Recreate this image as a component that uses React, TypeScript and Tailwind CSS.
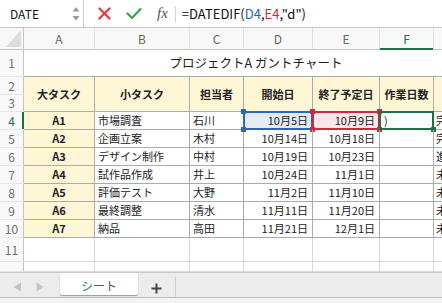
import React from "react";

const rows = [
  ["A1", "市場調査", "石川", "10月5日", "10月9日", "完了"],
  ["A2", "企画立案", "木村", "10月14日", "10月18日", "完了"],
  ["A3", "デザイン制作", "中村", "10月19日", "10月23日", "進行中"],
  ["A4", "試作品作成", "井上", "10月24日", "11月1日", "未着手"],
  ["A5", "評価テスト", "大野", "11月2日", "11月10日", "未着手"],
  ["A6", "最終調整", "清水", "11月11日", "11月20日", "未着手"],
  ["A7", "納品", "高田", "11月21日", "12月1日", "未着手"],
];

function RowHead({ n, active }: { n: string; active?: boolean }) {
  return (
    <div
      className={
        "relative flex items-center justify-center border-r border-b border-r-[#c4c4c4] border-b-[#e8e8e8] bg-[#f8f8f8] text-[12px] " +
        (active ? "text-[#1e7145]" : "text-[#707070]")
      }
    >
      {n}
      {active && <div className="absolute right-[-1px] top-0 bottom-0 w-[2px] bg-[#1e7145]" />}
    </div>
  );
}

function Corner({ c }: { c: string }) {
  return <div className={"absolute w-[5px] h-[5px] " + c} />;
}

export default function App() {
  const cell = "border-r border-b border-[#ababab] flex items-center text-[11px] text-[#222] whitespace-nowrap overflow-hidden";
  return (
    <div className="w-[442px] h-[303px] overflow-hidden bg-white flex flex-col font-['Noto_Sans_CJK_JP',sans-serif]">
      {/* formula bar */}
      <div className="h-[28px] shrink-0 flex items-center border-b border-[#c6c6c6] bg-white">
        <div className="relative w-[84px] h-full border-r border-[#cfcfcf] flex items-center pl-[10px] text-[12px] text-[#111]">
          DATE
          <svg className="absolute right-[3px] top-[6px]" width="8" height="16" viewBox="0 0 8 16">
            <path d="M4 1 L7.5 5.5 L0.5 5.5 Z" fill="#9a9a9a" />
            <path d="M4 14.5 L7.5 10 L0.5 10 Z" fill="#9a9a9a" />
          </svg>
        </div>
        <div className="flex items-center h-full pl-[14px]">
          <svg width="13" height="13" viewBox="0 0 13 13">
            <path d="M1.5 1.5 L11.5 11.5 M11.5 1.5 L1.5 11.5" stroke="#e2393f" strokeWidth="2.2" strokeLinecap="round" />
          </svg>
          <svg className="ml-[15px]" width="16" height="13" viewBox="0 0 16 13">
            <path d="M1.5 6.5 L6 11 L14.5 2" stroke="#3aa64a" strokeWidth="2.3" fill="none" strokeLinecap="round" strokeLinejoin="round" />
          </svg>
          <span className="ml-[15px] text-[15px] italic text-[#555] font-['Liberation_Serif',serif] leading-none">fx</span>
          <div className="ml-[7px] w-px h-[16px] bg-[#d4d4d4]" />
          <span className="ml-[6px] text-[13px] text-[#111]">
            =DATEDIF(<span className="text-[#2a5fc7]">D4</span>,<span className="text-[#d02a3e]">E4</span>,"d")
          </span>
        </div>
      </div>

      {/* grid */}
      <div className="grid shrink-0 w-[488px] grid-cols-[24px_71px_95px_54px_69px_67px_54px_54px] grid-rows-[22px_27px_18px_17px_18px_18px_18px_18px_18px_18px_18px_24px_10px]">
        {/* column headers */}
        <div className="relative border-r border-b border-[#c4c4c4] bg-[#f8f8f8]">
          <svg className="absolute right-[2px] bottom-[2px]" width="15" height="17" viewBox="0 0 15 17">
            <path d="M15 0 L15 17 L0 17 Z" fill="#dcdcdc" />
          </svg>
        </div>
        {["A", "B", "C", "D", "E", "F", "G"].map((l) => (
          <div
            key={l}
            className={
              "relative flex items-center justify-center border-r border-b border-r-[#dedede] border-b-[#c4c4c4] bg-[#f8f8f8] text-[12px] " +
              (l === "F" ? "text-[#1e7145]" : "text-[#666]")
            }
          >
            {l}
            {l === "F" && <div className="absolute left-0 right-0 bottom-[-1px] h-[2px] bg-[#1e7145]" />}
          </div>
        ))}

        {/* row 1 */}
        <RowHead n="1" />
        <div className="col-span-7 border-b border-[#ababab] flex items-center justify-center text-[12.5px] text-[#222] whitespace-nowrap">
          プロジェクトA ガントチャート
        </div>

        {/* rows 2-3 */}
        <RowHead n="2" />
        {["大タスク", "小タスク", "担当者", "開始日", "終了予定日", "作業日数", ""].map((h, i) => (
          <div key={i} className={"row-span-2 justify-center bg-[#fff6d6] font-bold " + cell}>
            {h}
          </div>
        ))}
        <div className="row-start-4 col-start-1 flex items-center justify-center border-r border-b border-r-[#c4c4c4] border-b-[#e8e8e8] bg-[#f8f8f8] text-[12px] text-[#707070]">
          3
        </div>

        {/* data rows */}
        {rows.map((r, i) => {
          const first = i === 0;
          return (
            <React.Fragment key={r[0]}>
              <RowHead n={String(i + 4)} active={first} />
              <div className={"justify-center bg-[#fff6d6] font-bold " + cell}>{r[0]}</div>
              <div className={"pl-[3px] " + cell}>{r[1]}</div>
              <div className={"pl-[3px] " + cell}>{r[2]}</div>
              <div className={"relative justify-end pr-[4px] " + cell + (first ? " bg-[#e5ebf7] overflow-visible" : "")}>
                {r[3]}
                {first && (
                  <>
                    <div className="absolute -left-[1px] -top-[1px] right-[-1px] bottom-[-1px] border-2 border-[#2d62c9]" />
                    <Corner c="bg-[#2d62c9] -left-[3px] -top-[3px]" />
                    <Corner c="bg-[#2d62c9] -left-[3px] -bottom-[3px]" />
                  </>
                )}
              </div>
              <div className={"relative justify-end pr-[4px] " + cell + (first ? " bg-[#fbe6e8] overflow-visible" : "")}>
                {r[4]}
                {first && (
                  <>
                    <div className="absolute -left-[1px] -top-[1px] right-[-1px] bottom-[-1px] border-2 border-[#d0283c]" />
                    <Corner c="bg-[#d0283c] -left-[3px] -top-[3px]" />
                    <Corner c="bg-[#d0283c] -left-[3px] -bottom-[3px]" />
                    <Corner c="bg-[#d0283c] -right-[3px] -top-[3px]" />
                    <Corner c="bg-[#d0283c] -right-[3px] -bottom-[3px]" />
                  </>
                )}
              </div>
              <div className={"relative pl-[4px] " + cell + (first ? " overflow-visible" : "")}>
                {first && (
                  <>
                    <span>)</span>
                    <div className="absolute -left-[1px] -top-[1px] right-[-1px] bottom-[-1px] border-2 border-[#1e7145]" />
                    <Corner c="bg-[#1e7145] -right-[3px] -bottom-[3px]" />
                  </>
                )}
              </div>
              <div className={"pl-[2px] " + cell}>{r[5]}</div>
            </React.Fragment>
          );
        })}

        {/* empty rows 11, 12 */}
        {["11", ""].map((n) => (
          <React.Fragment key={"e" + n}>
            <RowHead n={n} />
            {[0, 1, 2, 3, 4, 5, 6].map((j) => (
              <div key={j} className="border-r border-b border-[#d9d9d9]" />
            ))}
          </React.Fragment>
        ))}
      </div>

      {/* sheet tabs */}
      <div className="h-[26px] shrink-0 flex items-stretch bg-[#ececec] border-t border-[#c9c9c9] border-b border-b-[#bdbdbd]">
        <div className="w-[60px] flex items-center pl-[13px] gap-[14px] pt-[4px]">
          <svg width="9" height="10" viewBox="0 0 9 10"><path d="M8 0.5 L8 9.5 L0.5 5 Z" fill="#c3c3c3" /></svg>
          <svg width="8" height="10" viewBox="0 0 8 10"><path d="M0.5 0.5 L0.5 9.5 L7.5 5 Z" fill="#c3c3c3" /></svg>
        </div>
        <div className="w-[78px] mb-[2px] pt-[3px] bg-white rounded-b-[2px] shadow-[0_1px_1px_rgba(0,0,0,0.35)] flex items-center justify-center text-[12px] text-[#1e7145]">
          シート
        </div>
        <div className="w-[38px] flex items-center justify-center pt-[3px] border-r border-[#cfcfcf] my-[4px] mb-0">
          <svg width="11" height="11" viewBox="0 0 11 11"><path d="M5.5 0.5 V10.5 M0.5 5.5 H10.5" stroke="#444" strokeWidth="2" /></svg>
        </div>
      </div>
      <div className="flex-1 bg-[#f3f3f3]" />
    </div>
  );
}
